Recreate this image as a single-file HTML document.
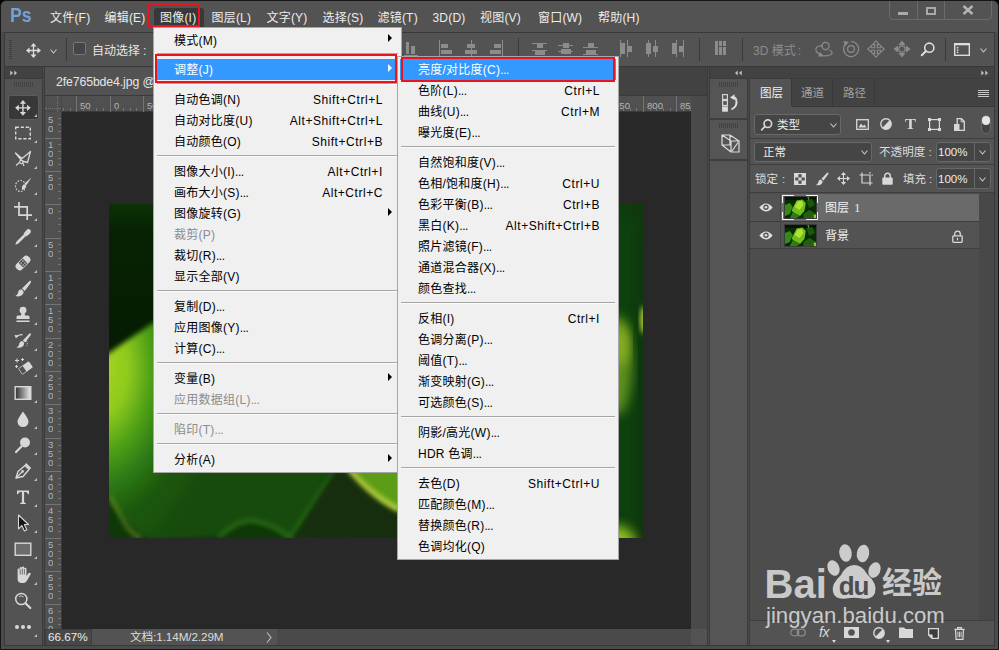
<!DOCTYPE html>
<html lang="zh-CN">
<head>
<meta charset="utf-8">
<title>Photoshop</title>
<style>
*{box-sizing:border-box;margin:0;padding:0}
html,body{width:999px;height:650px;overflow:hidden;background:#4d4d4d}
body{position:relative;font-family:"Liberation Sans","Noto Sans CJK SC",sans-serif;font-size:12px;color:#e6e6e6}
div,span,svg{position:absolute}
svg{overflow:visible}
.b{background:#535353}
.d{background:#424242}
.mi{top:10px;height:16px;line-height:16px;font-size:12px;color:#ececec;white-space:nowrap;letter-spacing:0.2px;margin-left:-1px}
.g{background:#8c8c8c}
.menu{background:#f0f0f0;border:1px solid #a6a6a6;color:#000;font-size:12px}
.row{left:2px;right:2px;height:21px;line-height:23px;white-space:nowrap;letter-spacing:0.25px}
.row .t{left:18px;top:0}
.row .k{top:0;right:16px;letter-spacing:0.55px}
.dis{color:#8c8c8c}
.row i{position:static;font-style:normal;letter-spacing:-0.45px}
.sep{height:2px;left:3px;right:3px;border-top:1px solid #a6a6a6;border-bottom:1px solid #fbfbfb}
.arr{width:0;height:0;right:7px;border-left:4px solid #000;border-top:4px solid transparent;border-bottom:4px solid transparent}
.hl{background:#3399ff;color:#fff}
.hl .arr{border-left-color:#fff}
.red{border:2px solid #e8151f}
.rl{font-size:9.6px;color:#b4b4b4;line-height:10px;white-space:nowrap}
.tk{background:#747474}
.vs{background:#3a3a3a;width:1px}
.lt{font-size:12px;color:#e2e2e2;white-space:nowrap;line-height:14px}
</style>
</head>
<body>
<div class="" style="left:0px;top:0px;width:999px;height:650px;background:#4b4b4b;border-radius:6px 6px 0 0;"></div>
<div class="b" style="left:1px;top:1px;width:997px;height:31px;border-radius:5px 5px 0 0;"></div>
<div style="left:10px;top:2.5px;font-size:21px;font-weight:bold;color:#73a2d6;line-height:24px;transform:scaleX(0.84);transform-origin:0 0">Ps</div>
<div class="" style="left:154px;top:8px;width:50px;height:19px;background:#383838;border-radius:3px 3px 0 0;"></div>
<div class="mi" style="left:51px">文件(F)</div>
<div class="mi" style="left:105.5px">编辑(E)</div>
<div class="mi" style="left:161px">图像(I)</div>
<div class="mi" style="left:212.5px">图层(L)</div>
<div class="mi" style="left:267.5px">文字(Y)</div>
<div class="mi" style="left:323.5px">选择(S)</div>
<div class="mi" style="left:378.5px">滤镜(T)</div>
<div class="mi" style="left:433.5px">3D(D)</div>
<div class="mi" style="left:481px">视图(V)</div>
<div class="mi" style="left:539px">窗口(W)</div>
<div class="mi" style="left:599px">帮助(H)</div>
<div style="left:889px;top:-4px;width:103px;height:24px;border:1px solid #6b6b6b;border-radius:4px"></div>
<div class="" style="left:917px;top:0px;width:1px;height:19px;background:#6b6b6b"></div>
<div class="" style="left:944px;top:0px;width:1px;height:19px;background:#6b6b6b"></div>
<div class="" style="left:898px;top:12px;width:10px;height:3px;background:#a9a9a9"></div>
<div class="" style="left:926px;top:7px;width:10px;height:8px;border:2px solid #a9a9a9"></div>
<svg style="left:962px;top:5px" width="12" height="10" viewBox="0 0 12 10"><path d="M1.5 1 L10.5 9 M10.5 1 L1.5 9" stroke="#b4b4b4" stroke-width="2.4" fill="none"/></svg>
<div class="b" style="left:4px;top:32px;width:991px;height:35px;border:1px solid #383838;"></div>
<div class="" style="left:9px;top:40px;width:3px;height:1px;background:#3e3e3e"></div>
<div class="" style="left:9px;top:42px;width:3px;height:1px;background:#3e3e3e"></div>
<div class="" style="left:9px;top:44px;width:3px;height:1px;background:#3e3e3e"></div>
<div class="" style="left:9px;top:46px;width:3px;height:1px;background:#3e3e3e"></div>
<div class="" style="left:9px;top:48px;width:3px;height:1px;background:#3e3e3e"></div>
<div class="" style="left:9px;top:50px;width:3px;height:1px;background:#3e3e3e"></div>
<div class="" style="left:9px;top:52px;width:3px;height:1px;background:#3e3e3e"></div>
<div class="" style="left:9px;top:54px;width:3px;height:1px;background:#3e3e3e"></div>
<div class="" style="left:9px;top:56px;width:3px;height:1px;background:#3e3e3e"></div>
<div class="" style="left:9px;top:58px;width:3px;height:1px;background:#3e3e3e"></div>
<svg style="left:26px;top:43px" width="15" height="15" viewBox="0 0 16 16"><path d="M8 0 L11.2 3.8 H8.7 V7.3 H12.2 V4.8 L16 8 L12.2 11.2 V8.7 H8.7 V12.2 H11.2 L8 16 L4.8 12.2 H7.3 V8.7 H3.8 V11.2 L0 8 L3.8 4.8 V7.3 H7.3 V3.8 H4.8 Z" fill="#dcdcdc"/></svg>
<svg style="left:50px;top:49px" width="7" height="5" viewBox="0 0 7 5"><path d="M0.5 0.5 L3.5 4 L6.5 0.5" stroke="#c8c8c8" stroke-width="1.1" fill="none"/></svg>
<div class="vs" style="left:66px;top:38px;width:1px;height:23px;"></div>
<div class="" style="left:73px;top:42px;width:13px;height:13px;background:#454545;border:1px solid #777;border-radius:2px"></div>
<div class="lt" style="left:92px;top:44px;color:#e6e6e6">自动选择<span style="position:static;margin-left:3px">:</span></div>
<div class="g" style="left:404px;top:55px;width:14px;height:1px;"></div>
<div class="g" style="left:406px;top:42px;width:3px;height:12px;"></div>
<div class="g" style="left:411px;top:46px;width:4px;height:8px;"></div>
<div class="g" style="left:439px;top:40px;width:1px;height:17px;"></div>
<div class="g" style="left:441px;top:44px;width:7px;height:4px;"></div>
<div class="g" style="left:441px;top:50px;width:11px;height:4px;"></div>
<div class="g" style="left:471px;top:40px;width:1px;height:17px;"></div>
<div class="g" style="left:467px;top:44px;width:8px;height:4px;"></div>
<div class="g" style="left:465px;top:50px;width:12px;height:4px;"></div>
<div class="g" style="left:502px;top:40px;width:1px;height:17px;"></div>
<div class="g" style="left:494px;top:44px;width:7px;height:4px;"></div>
<div class="g" style="left:490px;top:50px;width:11px;height:4px;"></div>
<div class="vs" style="left:518px;top:38px;width:1px;height:23px;"></div>
<div class="g" style="left:532px;top:43px;width:15px;height:1px;"></div>
<div class="g" style="left:537px;top:44px;width:6px;height:4px;"></div>
<div class="g" style="left:532px;top:50px;width:15px;height:1px;"></div>
<div class="g" style="left:535px;top:51px;width:10px;height:4px;"></div>
<div class="g" style="left:558px;top:45px;width:15px;height:1px;"></div>
<div class="g" style="left:563px;top:43px;width:6px;height:5px;"></div>
<div class="g" style="left:558px;top:51px;width:15px;height:1px;"></div>
<div class="g" style="left:561px;top:49px;width:10px;height:5px;"></div>
<div class="g" style="left:583px;top:47px;width:15px;height:1px;"></div>
<div class="g" style="left:588px;top:43px;width:6px;height:4px;"></div>
<div class="g" style="left:583px;top:54px;width:15px;height:1px;"></div>
<div class="g" style="left:586px;top:50px;width:10px;height:4px;"></div>
<div class="g" style="left:620px;top:40px;width:1px;height:17px;"></div>
<div class="g" style="left:621px;top:43px;width:4px;height:11px;"></div>
<div class="g" style="left:627px;top:40px;width:1px;height:17px;"></div>
<div class="g" style="left:628px;top:46px;width:4px;height:6px;"></div>
<div class="g" style="left:648px;top:40px;width:1px;height:17px;"></div>
<div class="g" style="left:646px;top:43px;width:5px;height:11px;"></div>
<div class="g" style="left:655px;top:40px;width:1px;height:17px;"></div>
<div class="g" style="left:653px;top:46px;width:5px;height:6px;"></div>
<div class="g" style="left:676px;top:40px;width:1px;height:17px;"></div>
<div class="g" style="left:672px;top:43px;width:4px;height:11px;"></div>
<div class="g" style="left:683px;top:40px;width:1px;height:17px;"></div>
<div class="g" style="left:679px;top:46px;width:4px;height:6px;"></div>
<div class="vs" style="left:699px;top:38px;width:1px;height:23px;"></div>
<div class="g" style="left:715px;top:41px;width:3px;height:14px;"></div>
<div class="g" style="left:719px;top:41px;width:3px;height:5px;"></div>
<div class="g" style="left:719px;top:47px;width:3px;height:8px;"></div>
<div class="g" style="left:723px;top:41px;width:3px;height:5px;"></div>
<div class="g" style="left:723px;top:47px;width:3px;height:8px;"></div>
<div class="vs" style="left:742px;top:38px;width:1px;height:23px;"></div>
<div class="lt" style="left:753px;top:44px;color:#8c8c8c;font-size:12px">3D 模式<span style="position:static;margin-left:2px">:</span></div>
<svg style="left:814px;top:40px" width="100" height="18" viewBox="0 0 100 18"><g fill="none" stroke="#8c8c8c" stroke-width="1.2"><path d="M6 14.5 Q0 11 2.5 7.5 Q5 5 9 6.5 M15.5 10 Q20 12 17 14.5 Q13 16.5 8.5 15.5"/><circle cx="11.5" cy="6" r="3.6"/><path d="M32 3.5 A7.5 7.5 0 1 0 37 1.5"/><circle cx="37" cy="9" r="3.4"/><path d="M62 0.8 L65.4 4.6 H63.3 V7.7 H66.4 V5.6 L70.2 9 L66.4 12.4 V10.3 H63.3 V13.4 H65.4 L62 17.2 L58.6 13.4 H60.7 V10.3 H57.6 V12.4 L53.8 9 L57.6 5.6 V7.7 H60.7 V4.6 H58.6 Z" stroke-width="1.1"/><circle cx="88" cy="9" r="3.2"/></g><g fill="#8c8c8c"><path d="M6.5 12 L9.5 16.5 L4 16.5 Z M29.5 1 L35 2 L31 6 Z M88 0.5 L91.5 5 H84.5 Z M88 17.5 L91.5 13 H84.5 Z M79.5 9 L84 5.5 V12.5 Z M96.5 9 L92 5.5 V12.5 Z"/></g></svg>
<svg style="left:921px;top:42px" width="14" height="14" viewBox="0 0 14 14"><g><circle cx="8.3" cy="5.7" r="4.6" fill="none" stroke="#dcdcdc" stroke-width="1.6"/><path d="M5 9 L0.8 13.2" stroke="#dcdcdc" stroke-width="2" stroke-linecap="round"/></g></svg>
<div class="vs" style="left:945px;top:38px;width:1px;height:23px;"></div>
<svg style="left:954px;top:43px" width="16" height="13" viewBox="0 0 16 13"><rect x="0.7" y="0.7" width="14.6" height="11.6" fill="none" stroke="#dcdcdc" stroke-width="1.4"/><rect x="0.7" y="0.7" width="14.6" height="1.6" fill="#dcdcdc"/><rect x="2.8" y="4" width="1.6" height="1.4" fill="#dcdcdc"/><rect x="2.8" y="6.3" width="1.6" height="1.4" fill="#dcdcdc"/><rect x="2.8" y="8.6" width="1.6" height="1.4" fill="#dcdcdc"/></svg>
<svg style="left:980px;top:48px" width="7" height="5" viewBox="0 0 7 5"><path d="M0.5 0.5 L3.5 4 L6.5 0.5" stroke="#c8c8c8" stroke-width="1.1" fill="none"/></svg>
<div class="d" style="left:5px;top:67px;width:38px;height:11px;"></div>
<svg style="left:10px;top:70px" width="8" height="6" viewBox="0 0 8 6"><path d="M0.3 0.5 L3 3 L0.3 5.5 Z M4.3 0.5 L7 3 L4.3 5.5 Z" fill="#c4c4c4"/></svg>
<div class="b" style="left:5px;top:78px;width:38px;height:568px;border-top:1px solid #3c3c3c"></div>
<div class="" style="left:14px;top:82px;width:1px;height:5px;background:#424242"></div>
<div class="" style="left:16px;top:82px;width:1px;height:5px;background:#424242"></div>
<div class="" style="left:18px;top:82px;width:1px;height:5px;background:#424242"></div>
<div class="" style="left:20px;top:82px;width:1px;height:5px;background:#424242"></div>
<div class="" style="left:22px;top:82px;width:1px;height:5px;background:#424242"></div>
<div class="" style="left:24px;top:82px;width:1px;height:5px;background:#424242"></div>
<div class="" style="left:26px;top:82px;width:1px;height:5px;background:#424242"></div>
<div class="" style="left:28px;top:82px;width:1px;height:5px;background:#424242"></div>
<div class="" style="left:30px;top:82px;width:1px;height:5px;background:#424242"></div>
<div class="" style="left:32px;top:82px;width:1px;height:5px;background:#424242"></div>
<div class="" style="left:8px;top:95px;width:31px;height:25px;background:#383838;border:1px solid #5c5c5c;border-radius:3px"></div>
<svg style="left:14px;top:98px" width="18" height="18" viewBox="0 0 18 18"><path transform="translate(1.1,2) scale(0.98)" d="M8 0 L11.2 3.8 H8.7 V7.3 H12.2 V4.8 L16 8 L12.2 11.2 V8.7 H8.7 V12.2 H11.2 L8 16 L4.8 12.2 H7.3 V8.7 H3.8 V11.2 L0 8 L3.8 4.8 V7.3 H7.3 V3.8 H4.8 Z" fill="#d8d8d8"/></svg>
<svg style="left:34px;top:114px" width="3" height="3" viewBox="0 0 3 3"><path d="M3 0 V3 H0 Z" fill="#bdbdbd"/></svg>
<svg style="left:14px;top:124px" width="18" height="18" viewBox="0 0 18 18"><rect x="1.7" y="3.2" width="14.6" height="11.6" fill="none" stroke="#d8d8d8" stroke-width="1.4" stroke-dasharray="3.2 1.8"/></svg>
<svg style="left:34px;top:140px" width="3" height="3" viewBox="0 0 3 3"><path d="M3 0 V3 H0 Z" fill="#bdbdbd"/></svg>
<svg style="left:14px;top:150px" width="18" height="18" viewBox="0 0 18 18"><path d="M1.5 3 L8 8.5 L16.5 1.5 L13.5 12.5 L8 11 Z" fill="none" stroke="#d8d8d8" stroke-width="1.3" stroke-linejoin="round"/><path d="M6.5 11.5 L2 15.5 M8.5 12 L10 16" stroke="#d8d8d8" stroke-width="1.2"/><circle cx="7.3" cy="12" r="1.6" fill="#535353" stroke="#d8d8d8" stroke-width="1.1"/></svg>
<svg style="left:34px;top:166px" width="3" height="3" viewBox="0 0 3 3"><path d="M3 0 V3 H0 Z" fill="#bdbdbd"/></svg>
<svg style="left:14px;top:176px" width="18" height="18" viewBox="0 0 18 18"><ellipse cx="6.5" cy="10" rx="5" ry="5.5" fill="none" stroke="#d8d8d8" stroke-width="1.1" stroke-dasharray="1.6 1.4"/><path d="M17.5 1.5 L12.5 9 L10.5 7.5 Z M10 8.2 Q7.3 9.8 8 14 Q11.8 13 12.3 9.8 Z" fill="#d8d8d8"/></svg>
<svg style="left:34px;top:192px" width="3" height="3" viewBox="0 0 3 3"><path d="M3 0 V3 H0 Z" fill="#bdbdbd"/></svg>
<svg style="left:14px;top:202px" width="18" height="18" viewBox="0 0 18 18"><path d="M5 0 V13.2 H18 M0 4.8 H13.2 V18" fill="none" stroke="#d8d8d8" stroke-width="1.7"/></svg>
<svg style="left:34px;top:218px" width="3" height="3" viewBox="0 0 3 3"><path d="M3 0 V3 H0 Z" fill="#bdbdbd"/></svg>
<svg style="left:14px;top:228px" width="18" height="18" viewBox="0 0 18 18"><path d="M15.8 2.2 Q17 3.8 15.3 5.2 L13.2 7 L11 4.8 L12.8 2.7 Q14.3 1 15.8 2.2 Z M10 5 L13 8 M10.8 6.3 L3 14 L2 16 L4 15 L11.8 7.3" fill="#d8d8d8" stroke="#d8d8d8" stroke-width="1.2" stroke-linejoin="round"/></svg>
<svg style="left:34px;top:244px" width="3" height="3" viewBox="0 0 3 3"><path d="M3 0 V3 H0 Z" fill="#bdbdbd"/></svg>
<svg style="left:14px;top:254px" width="18" height="18" viewBox="0 0 18 18"><g transform="rotate(-45 9 9)"><rect x="0.5" y="5" width="17" height="8" rx="3.5" fill="#d8d8d8"/><rect x="6" y="5.8" width="6" height="6.4" fill="#535353"/><circle cx="7.7" cy="7.6" r="0.7" fill="#d8d8d8"/><circle cx="10.3" cy="7.6" r="0.7" fill="#d8d8d8"/><circle cx="7.7" cy="10.4" r="0.7" fill="#d8d8d8"/><circle cx="10.3" cy="10.4" r="0.7" fill="#d8d8d8"/></g><path d="M1 2 h4 M3 0 v4" stroke="#d8d8d8" stroke-width="0" /></svg>
<svg style="left:34px;top:270px" width="3" height="3" viewBox="0 0 3 3"><path d="M3 0 V3 H0 Z" fill="#bdbdbd"/></svg>
<svg style="left:14px;top:280px" width="18" height="18" viewBox="0 0 18 18"><path d="M16.8 1 Q17.5 1.7 16.6 3 L10.8 11 L8 8.6 L15 1.4 Q16 0.4 16.8 1 Z M7.2 9.3 Q4.2 9.8 4 13 Q3.4 15.2 1.3 16 Q6.8 17.5 9 14 Q10 12.3 9.4 11 Z" fill="#d8d8d8"/></svg>
<svg style="left:34px;top:296px" width="3" height="3" viewBox="0 0 3 3"><path d="M3 0 V3 H0 Z" fill="#bdbdbd"/></svg>
<svg style="left:14px;top:306px" width="18" height="18" viewBox="0 0 18 18"><circle cx="9" cy="4.2" r="3.4" fill="#d8d8d8"/><path d="M7.6 6 h2.8 l0.6 3.5 h3 q1.5 0 1.5 1.5 v2 h-13 v-2 q0 -1.5 1.5 -1.5 h3 Z M2.5 14.5 h13 v1.5 h-13 Z" fill="#d8d8d8"/></svg>
<svg style="left:34px;top:322px" width="3" height="3" viewBox="0 0 3 3"><path d="M3 0 V3 H0 Z" fill="#bdbdbd"/></svg>
<svg style="left:14px;top:332px" width="18" height="18" viewBox="0 0 18 18"><path d="M16.8 1.5 Q17.4 2.2 16.6 3.3 L11.2 10.5 L8.8 8.4 L15.2 1.8 Q16.1 0.9 16.8 1.5 Z M8 9 Q5.3 9.5 5.1 12.5 Q4.5 14.6 2.5 15.5 Q7.5 16.8 9.6 13.5 Q10.5 11.8 10 10.6 Z" fill="#d8d8d8"/><path d="M2.5 5 Q5 2 8.5 2.8" fill="none" stroke="#d8d8d8" stroke-width="1.2"/><path d="M0.5 3 L4.2 3.2 L2 6.5 Z" fill="#d8d8d8"/><path d="M12.5 9 Q14.5 12 12 15" fill="none" stroke="#d8d8d8" stroke-width="1" stroke-dasharray="1 1.2"/></svg>
<svg style="left:34px;top:348px" width="3" height="3" viewBox="0 0 3 3"><path d="M3 0 V3 H0 Z" fill="#bdbdbd"/></svg>
<svg style="left:14px;top:358px" width="18" height="18" viewBox="0 0 18 18"><g transform="rotate(-35 11 10)"><rect x="5" y="6.5" width="13" height="7.5" rx="1" fill="#d8d8d8"/><rect x="5.6" y="7.1" width="4.6" height="6.3" fill="#535353"/></g><path d="M3 0.5 v4 M1 2.5 h4 M8.5 0 v3 M7 1.5 h3 M2.5 7 v3 M1 8.5 h3" stroke="#d8d8d8" stroke-width="1"/></svg>
<svg style="left:34px;top:374px" width="3" height="3" viewBox="0 0 3 3"><path d="M3 0 V3 H0 Z" fill="#bdbdbd"/></svg>
<svg style="left:14px;top:384px" width="18" height="18" viewBox="0 0 18 18"><defs><linearGradient id="gg" x1="0" x2="1"><stop offset="0" stop-color="#2e2e2e"/><stop offset="1" stop-color="#ededed"/></linearGradient></defs><rect x="1.2" y="2.7" width="15.6" height="12.6" fill="url(#gg)" stroke="#d8d8d8" stroke-width="1.4"/></svg>
<svg style="left:34px;top:400px" width="3" height="3" viewBox="0 0 3 3"><path d="M3 0 V3 H0 Z" fill="#bdbdbd"/></svg>
<svg style="left:14px;top:410px" width="18" height="18" viewBox="0 0 18 18"><path d="M9 1.5 Q14.5 9 14.5 11.5 A5.5 5.5 0 0 1 3.5 11.5 Q3.5 9 9 1.5 Z" fill="#d8d8d8"/></svg>
<svg style="left:34px;top:426px" width="3" height="3" viewBox="0 0 3 3"><path d="M3 0 V3 H0 Z" fill="#bdbdbd"/></svg>
<svg style="left:14px;top:436px" width="18" height="18" viewBox="0 0 18 18"><circle cx="11" cy="6.5" r="5" fill="#d8d8d8"/><path d="M7.5 10.5 L2 16" stroke="#d8d8d8" stroke-width="2.2" stroke-linecap="round"/></svg>
<svg style="left:34px;top:452px" width="3" height="3" viewBox="0 0 3 3"><path d="M3 0 V3 H0 Z" fill="#bdbdbd"/></svg>
<svg style="left:14px;top:462px" width="18" height="18" viewBox="0 0 18 18"><path d="M2 16 L4 9.5 L11 3.5 L15 7.5 L9 14.5 Z" fill="none" stroke="#d8d8d8" stroke-width="1.4" stroke-linejoin="round"/><path d="M2.5 15.5 L8 10" stroke="#d8d8d8" stroke-width="1.1"/><circle cx="8.6" cy="9.4" r="1.3" fill="#d8d8d8"/><path d="M11.5 1.8 L16.5 6.8" stroke="#d8d8d8" stroke-width="2"/></svg>
<svg style="left:34px;top:478px" width="3" height="3" viewBox="0 0 3 3"><path d="M3 0 V3 H0 Z" fill="#bdbdbd"/></svg>
<svg style="left:14px;top:488px" width="18" height="18" viewBox="0 0 18 18"><path d="M3 2.5 H15 V6.2 H14 Q13.8 4 11.5 3.9 H10.1 V14 Q10.1 15 11.8 15.1 V16 H6.2 V15.1 Q7.9 15 7.9 14 V3.9 H6.5 Q4.2 4 4 6.2 H3 Z" fill="#d8d8d8"/></svg>
<svg style="left:34px;top:504px" width="3" height="3" viewBox="0 0 3 3"><path d="M3 0 V3 H0 Z" fill="#bdbdbd"/></svg>
<svg style="left:14px;top:514px" width="18" height="18" viewBox="0 0 18 18"><path d="M4.5 1 L14.5 10.5 H10.3 L12.8 15.8 L10.4 17 L7.8 11.6 L4.5 14.8 Z" fill="#161616" stroke="#d8d8d8" stroke-width="1.1" stroke-linejoin="round"/></svg>
<svg style="left:34px;top:530px" width="3" height="3" viewBox="0 0 3 3"><path d="M3 0 V3 H0 Z" fill="#bdbdbd"/></svg>
<svg style="left:14px;top:540px" width="18" height="18" viewBox="0 0 18 18"><rect x="1.2" y="3.2" width="15.6" height="12.1" fill="#6c6c6c" stroke="#d8d8d8" stroke-width="1.4"/></svg>
<svg style="left:34px;top:556px" width="3" height="3" viewBox="0 0 3 3"><path d="M3 0 V3 H0 Z" fill="#bdbdbd"/></svg>
<svg style="left:14px;top:566px" width="18" height="18" viewBox="0 0 18 18"><path transform="translate(-0.8,0) scale(1.06,1)" d="M4.2 9.5 V3.6 Q4.2 2.6 5.2 2.6 Q6.2 2.6 6.2 3.6 V2 Q6.2 1 7.2 1 Q8.3 1 8.3 2 V1.6 Q8.3 0.6 9.4 0.6 Q10.4 0.6 10.4 1.6 V2.6 Q10.4 1.7 11.4 1.7 Q12.5 1.7 12.5 2.7 V10 L14.5 7.3 Q15.4 6.3 16.3 7 Q16.9 7.6 16.3 8.6 L12.8 15 Q11.8 17 9.6 17 H8 Q4.2 17 4.2 13 Z" fill="#d8d8d8"/><path d="M6.2 3.5 V8.5 M8.3 2.5 V8.5 M10.4 3 V8.5" stroke="#535353" stroke-width="0.8"/></svg>
<svg style="left:34px;top:582px" width="3" height="3" viewBox="0 0 3 3"><path d="M3 0 V3 H0 Z" fill="#bdbdbd"/></svg>
<svg style="left:14px;top:592px" width="18" height="18" viewBox="0 0 18 18"><circle cx="7.3" cy="7" r="5.6" fill="none" stroke="#d8d8d8" stroke-width="1.5"/><path d="M5 4.5 Q7.5 3 9.5 5" fill="none" stroke="#d8d8d8" stroke-width="0.9"/><path d="M11.5 11.2 L16.3 16" stroke="#d8d8d8" stroke-width="2.2" stroke-linecap="round"/></svg>
<svg style="left:14px;top:618px" width="18" height="18" viewBox="0 0 18 18"><circle cx="3" cy="9" r="2" fill="#d8d8d8"/><circle cx="9" cy="9" r="2" fill="#d8d8d8"/><circle cx="15" cy="9" r="2" fill="#d8d8d8"/></svg>
<svg style="left:34px;top:634px" width="3" height="3" viewBox="0 0 3 3"><path d="M3 0 V3 H0 Z" fill="#bdbdbd"/></svg>
<div class="" style="left:42px;top:67px;width:1px;height:579px;background:#3a3a3a"></div>
<div class="" style="left:43px;top:67px;width:1px;height:579px;background:#4b4b4b"></div>
<div class="" style="left:44px;top:67px;width:1px;height:579px;background:#3a3a3a"></div>
<div class="d" style="left:45px;top:67px;width:663px;height:29px;"></div>
<div class="b" style="left:45px;top:67px;width:262px;height:29px;"></div>
<div class="lt" style="left:56px;top:75px;font-size:12.3px;letter-spacing:-0.12px;color:#e4e4e4">2fe765bde4.jpg @ 66.7% (图层 1, RGB/8#) *</div>
<div class="" style="left:45px;top:95px;width:663px;height:1px;background:#3a3a3a"></div>
<div class="" style="left:45px;top:96px;width:646px;height:16px;background:#505050;border-bottom:1px solid #3a3a3a"></div>
<div class="" style="left:45px;top:112px;width:17px;height:517px;background:#505050;border-right:1px solid #3a3a3a"></div>
<div class="" style="left:45px;top:96px;width:17px;height:16px;background:#505050;border-right:1px solid #484848;border-bottom:1px solid #484848"></div>
<div style="left:45px;top:108px;width:16px;height:0;border-top:1px dotted #727272"></div><div style="left:57px;top:96px;width:0;height:16px;border-left:1px dotted #727272"></div>
<div class="" style="left:62px;top:112px;width:629px;height:517px;background:#282828"></div>
<div class="" style="left:691px;top:96px;width:16px;height:533px;background:#4a4a4a"></div>
<div class="tk" style="left:63px;top:108px;width:1px;height:3px;"></div>
<div class="tk" style="left:70px;top:108px;width:1px;height:3px;"></div>
<div class="tk" style="left:76px;top:96px;width:1px;height:16px;"></div>
<div class="rl" style="left:80px;top:101px;max-width:611px;overflow:hidden">50</div>
<div class="tk" style="left:83px;top:108px;width:1px;height:3px;"></div>
<div class="tk" style="left:89px;top:108px;width:1px;height:3px;"></div>
<div class="tk" style="left:96px;top:108px;width:1px;height:3px;"></div>
<div class="tk" style="left:103px;top:108px;width:1px;height:3px;"></div>
<div class="tk" style="left:110px;top:96px;width:1px;height:16px;"></div>
<div class="rl" style="left:114px;top:101px;max-width:577px;overflow:hidden">0</div>
<div class="tk" style="left:116px;top:108px;width:1px;height:3px;"></div>
<div class="tk" style="left:123px;top:108px;width:1px;height:3px;"></div>
<div class="tk" style="left:130px;top:108px;width:1px;height:3px;"></div>
<div class="tk" style="left:136px;top:108px;width:1px;height:3px;"></div>
<div class="tk" style="left:143px;top:96px;width:1px;height:16px;"></div>
<div class="rl" style="left:147px;top:101px;max-width:544px;overflow:hidden">50</div>
<div class="tk" style="left:150px;top:108px;width:1px;height:3px;"></div>
<div class="tk" style="left:156px;top:108px;width:1px;height:3px;"></div>
<div class="tk" style="left:163px;top:108px;width:1px;height:3px;"></div>
<div class="tk" style="left:170px;top:108px;width:1px;height:3px;"></div>
<div class="tk" style="left:176px;top:96px;width:1px;height:16px;"></div>
<div class="rl" style="left:180px;top:101px;max-width:511px;overflow:hidden">100</div>
<div class="tk" style="left:183px;top:108px;width:1px;height:3px;"></div>
<div class="tk" style="left:190px;top:108px;width:1px;height:3px;"></div>
<div class="tk" style="left:196px;top:108px;width:1px;height:3px;"></div>
<div class="tk" style="left:203px;top:108px;width:1px;height:3px;"></div>
<div class="tk" style="left:210px;top:96px;width:1px;height:16px;"></div>
<div class="rl" style="left:214px;top:101px;max-width:477px;overflow:hidden">150</div>
<div class="tk" style="left:216px;top:108px;width:1px;height:3px;"></div>
<div class="tk" style="left:223px;top:108px;width:1px;height:3px;"></div>
<div class="tk" style="left:230px;top:108px;width:1px;height:3px;"></div>
<div class="tk" style="left:236px;top:108px;width:1px;height:3px;"></div>
<div class="tk" style="left:243px;top:96px;width:1px;height:16px;"></div>
<div class="rl" style="left:247px;top:101px;max-width:444px;overflow:hidden">200</div>
<div class="tk" style="left:250px;top:108px;width:1px;height:3px;"></div>
<div class="tk" style="left:256px;top:108px;width:1px;height:3px;"></div>
<div class="tk" style="left:263px;top:108px;width:1px;height:3px;"></div>
<div class="tk" style="left:270px;top:108px;width:1px;height:3px;"></div>
<div class="tk" style="left:276px;top:96px;width:1px;height:16px;"></div>
<div class="rl" style="left:280px;top:101px;max-width:411px;overflow:hidden">250</div>
<div class="tk" style="left:283px;top:108px;width:1px;height:3px;"></div>
<div class="tk" style="left:290px;top:108px;width:1px;height:3px;"></div>
<div class="tk" style="left:296px;top:108px;width:1px;height:3px;"></div>
<div class="tk" style="left:303px;top:108px;width:1px;height:3px;"></div>
<div class="tk" style="left:310px;top:96px;width:1px;height:16px;"></div>
<div class="rl" style="left:314px;top:101px;max-width:377px;overflow:hidden">300</div>
<div class="tk" style="left:316px;top:108px;width:1px;height:3px;"></div>
<div class="tk" style="left:323px;top:108px;width:1px;height:3px;"></div>
<div class="tk" style="left:330px;top:108px;width:1px;height:3px;"></div>
<div class="tk" style="left:336px;top:108px;width:1px;height:3px;"></div>
<div class="tk" style="left:343px;top:96px;width:1px;height:16px;"></div>
<div class="rl" style="left:347px;top:101px;max-width:344px;overflow:hidden">350</div>
<div class="tk" style="left:350px;top:108px;width:1px;height:3px;"></div>
<div class="tk" style="left:356px;top:108px;width:1px;height:3px;"></div>
<div class="tk" style="left:363px;top:108px;width:1px;height:3px;"></div>
<div class="tk" style="left:370px;top:108px;width:1px;height:3px;"></div>
<div class="tk" style="left:376px;top:96px;width:1px;height:16px;"></div>
<div class="rl" style="left:380px;top:101px;max-width:311px;overflow:hidden">400</div>
<div class="tk" style="left:383px;top:108px;width:1px;height:3px;"></div>
<div class="tk" style="left:390px;top:108px;width:1px;height:3px;"></div>
<div class="tk" style="left:396px;top:108px;width:1px;height:3px;"></div>
<div class="tk" style="left:403px;top:108px;width:1px;height:3px;"></div>
<div class="tk" style="left:410px;top:96px;width:1px;height:16px;"></div>
<div class="rl" style="left:414px;top:101px;max-width:277px;overflow:hidden">450</div>
<div class="tk" style="left:416px;top:108px;width:1px;height:3px;"></div>
<div class="tk" style="left:423px;top:108px;width:1px;height:3px;"></div>
<div class="tk" style="left:430px;top:108px;width:1px;height:3px;"></div>
<div class="tk" style="left:436px;top:108px;width:1px;height:3px;"></div>
<div class="tk" style="left:443px;top:96px;width:1px;height:16px;"></div>
<div class="rl" style="left:447px;top:101px;max-width:244px;overflow:hidden">500</div>
<div class="tk" style="left:450px;top:108px;width:1px;height:3px;"></div>
<div class="tk" style="left:456px;top:108px;width:1px;height:3px;"></div>
<div class="tk" style="left:463px;top:108px;width:1px;height:3px;"></div>
<div class="tk" style="left:470px;top:108px;width:1px;height:3px;"></div>
<div class="tk" style="left:476px;top:96px;width:1px;height:16px;"></div>
<div class="rl" style="left:480px;top:101px;max-width:211px;overflow:hidden">550</div>
<div class="tk" style="left:483px;top:108px;width:1px;height:3px;"></div>
<div class="tk" style="left:490px;top:108px;width:1px;height:3px;"></div>
<div class="tk" style="left:496px;top:108px;width:1px;height:3px;"></div>
<div class="tk" style="left:503px;top:108px;width:1px;height:3px;"></div>
<div class="tk" style="left:510px;top:96px;width:1px;height:16px;"></div>
<div class="rl" style="left:514px;top:101px;max-width:177px;overflow:hidden">600</div>
<div class="tk" style="left:516px;top:108px;width:1px;height:3px;"></div>
<div class="tk" style="left:523px;top:108px;width:1px;height:3px;"></div>
<div class="tk" style="left:530px;top:108px;width:1px;height:3px;"></div>
<div class="tk" style="left:536px;top:108px;width:1px;height:3px;"></div>
<div class="tk" style="left:543px;top:96px;width:1px;height:16px;"></div>
<div class="rl" style="left:547px;top:101px;max-width:144px;overflow:hidden">650</div>
<div class="tk" style="left:550px;top:108px;width:1px;height:3px;"></div>
<div class="tk" style="left:556px;top:108px;width:1px;height:3px;"></div>
<div class="tk" style="left:563px;top:108px;width:1px;height:3px;"></div>
<div class="tk" style="left:570px;top:108px;width:1px;height:3px;"></div>
<div class="tk" style="left:576px;top:96px;width:1px;height:16px;"></div>
<div class="rl" style="left:580px;top:101px;max-width:111px;overflow:hidden">700</div>
<div class="tk" style="left:583px;top:108px;width:1px;height:3px;"></div>
<div class="tk" style="left:590px;top:108px;width:1px;height:3px;"></div>
<div class="tk" style="left:596px;top:108px;width:1px;height:3px;"></div>
<div class="tk" style="left:603px;top:108px;width:1px;height:3px;"></div>
<div class="tk" style="left:610px;top:96px;width:1px;height:16px;"></div>
<div class="rl" style="left:614px;top:101px;max-width:77px;overflow:hidden">750</div>
<div class="tk" style="left:616px;top:108px;width:1px;height:3px;"></div>
<div class="tk" style="left:623px;top:108px;width:1px;height:3px;"></div>
<div class="tk" style="left:630px;top:108px;width:1px;height:3px;"></div>
<div class="tk" style="left:636px;top:108px;width:1px;height:3px;"></div>
<div class="tk" style="left:643px;top:96px;width:1px;height:16px;"></div>
<div class="rl" style="left:647px;top:101px;max-width:44px;overflow:hidden">800</div>
<div class="tk" style="left:650px;top:108px;width:1px;height:3px;"></div>
<div class="tk" style="left:656px;top:108px;width:1px;height:3px;"></div>
<div class="tk" style="left:663px;top:108px;width:1px;height:3px;"></div>
<div class="tk" style="left:670px;top:108px;width:1px;height:3px;"></div>
<div class="tk" style="left:676px;top:96px;width:1px;height:16px;"></div>
<div class="rl" style="left:680px;top:101px;max-width:11px;overflow:hidden">850</div>
<div class="tk" style="left:683px;top:108px;width:1px;height:3px;"></div>
<div class="tk" style="left:690px;top:108px;width:1px;height:3px;"></div>
<div class="rl" style="left:48px;top:115.1px;height:10.0px;overflow:hidden">5</div>
<div class="rl" style="left:48px;top:124.4px;height:10.0px;overflow:hidden">0</div>
<div class="tk" style="left:58px;top:118px;width:3px;height:1px;"></div>
<div class="tk" style="left:58px;top:124px;width:3px;height:1px;"></div>
<div class="tk" style="left:58px;top:131px;width:3px;height:1px;"></div>
<div class="tk" style="left:45px;top:138px;width:16px;height:1px;"></div>
<div class="rl" style="left:48px;top:139.8px;height:10.0px;overflow:hidden">1</div>
<div class="rl" style="left:48px;top:149.1px;height:10.0px;overflow:hidden">0</div>
<div class="rl" style="left:48px;top:158.4px;height:10.0px;overflow:hidden">0</div>
<div class="tk" style="left:58px;top:144px;width:3px;height:1px;"></div>
<div class="tk" style="left:58px;top:151px;width:3px;height:1px;"></div>
<div class="tk" style="left:58px;top:158px;width:3px;height:1px;"></div>
<div class="tk" style="left:58px;top:164px;width:3px;height:1px;"></div>
<div class="tk" style="left:45px;top:171px;width:16px;height:1px;"></div>
<div class="rl" style="left:48px;top:172.8px;height:10.0px;overflow:hidden">5</div>
<div class="rl" style="left:48px;top:182.1px;height:10.0px;overflow:hidden">0</div>
<div class="tk" style="left:58px;top:178px;width:3px;height:1px;"></div>
<div class="tk" style="left:58px;top:184px;width:3px;height:1px;"></div>
<div class="tk" style="left:58px;top:191px;width:3px;height:1px;"></div>
<div class="tk" style="left:58px;top:198px;width:3px;height:1px;"></div>
<div class="tk" style="left:45px;top:204px;width:16px;height:1px;"></div>
<div class="rl" style="left:48px;top:205.8px;height:10.0px;overflow:hidden">0</div>
<div class="tk" style="left:58px;top:211px;width:3px;height:1px;"></div>
<div class="tk" style="left:58px;top:218px;width:3px;height:1px;"></div>
<div class="tk" style="left:58px;top:224px;width:3px;height:1px;"></div>
<div class="tk" style="left:58px;top:231px;width:3px;height:1px;"></div>
<div class="tk" style="left:45px;top:238px;width:16px;height:1px;"></div>
<div class="rl" style="left:48px;top:239.8px;height:10.0px;overflow:hidden">5</div>
<div class="rl" style="left:48px;top:249.1px;height:10.0px;overflow:hidden">0</div>
<div class="tk" style="left:58px;top:244px;width:3px;height:1px;"></div>
<div class="tk" style="left:58px;top:251px;width:3px;height:1px;"></div>
<div class="tk" style="left:58px;top:258px;width:3px;height:1px;"></div>
<div class="tk" style="left:58px;top:264px;width:3px;height:1px;"></div>
<div class="tk" style="left:45px;top:271px;width:16px;height:1px;"></div>
<div class="rl" style="left:48px;top:272.8px;height:10.0px;overflow:hidden">1</div>
<div class="rl" style="left:48px;top:282.1px;height:10.0px;overflow:hidden">0</div>
<div class="rl" style="left:48px;top:291.4px;height:10.0px;overflow:hidden">0</div>
<div class="tk" style="left:58px;top:278px;width:3px;height:1px;"></div>
<div class="tk" style="left:58px;top:284px;width:3px;height:1px;"></div>
<div class="tk" style="left:58px;top:291px;width:3px;height:1px;"></div>
<div class="tk" style="left:58px;top:298px;width:3px;height:1px;"></div>
<div class="tk" style="left:45px;top:304px;width:16px;height:1px;"></div>
<div class="rl" style="left:48px;top:305.8px;height:10.0px;overflow:hidden">1</div>
<div class="rl" style="left:48px;top:315.1px;height:10.0px;overflow:hidden">5</div>
<div class="rl" style="left:48px;top:324.4px;height:10.0px;overflow:hidden">0</div>
<div class="tk" style="left:58px;top:311px;width:3px;height:1px;"></div>
<div class="tk" style="left:58px;top:318px;width:3px;height:1px;"></div>
<div class="tk" style="left:58px;top:324px;width:3px;height:1px;"></div>
<div class="tk" style="left:58px;top:331px;width:3px;height:1px;"></div>
<div class="tk" style="left:45px;top:338px;width:16px;height:1px;"></div>
<div class="rl" style="left:48px;top:339.8px;height:10.0px;overflow:hidden">2</div>
<div class="rl" style="left:48px;top:349.1px;height:10.0px;overflow:hidden">0</div>
<div class="rl" style="left:48px;top:358.4px;height:10.0px;overflow:hidden">0</div>
<div class="tk" style="left:58px;top:345px;width:3px;height:1px;"></div>
<div class="tk" style="left:58px;top:351px;width:3px;height:1px;"></div>
<div class="tk" style="left:58px;top:358px;width:3px;height:1px;"></div>
<div class="tk" style="left:58px;top:365px;width:3px;height:1px;"></div>
<div class="tk" style="left:45px;top:371px;width:16px;height:1px;"></div>
<div class="rl" style="left:48px;top:372.8px;height:10.0px;overflow:hidden">2</div>
<div class="rl" style="left:48px;top:382.1px;height:10.0px;overflow:hidden">5</div>
<div class="rl" style="left:48px;top:391.4px;height:10.0px;overflow:hidden">0</div>
<div class="tk" style="left:58px;top:378px;width:3px;height:1px;"></div>
<div class="tk" style="left:58px;top:384px;width:3px;height:1px;"></div>
<div class="tk" style="left:58px;top:391px;width:3px;height:1px;"></div>
<div class="tk" style="left:58px;top:398px;width:3px;height:1px;"></div>
<div class="tk" style="left:45px;top:404px;width:16px;height:1px;"></div>
<div class="rl" style="left:48px;top:405.8px;height:10.0px;overflow:hidden">3</div>
<div class="rl" style="left:48px;top:415.1px;height:10.0px;overflow:hidden">0</div>
<div class="rl" style="left:48px;top:424.4px;height:10.0px;overflow:hidden">0</div>
<div class="tk" style="left:58px;top:411px;width:3px;height:1px;"></div>
<div class="tk" style="left:58px;top:418px;width:3px;height:1px;"></div>
<div class="tk" style="left:58px;top:424px;width:3px;height:1px;"></div>
<div class="tk" style="left:58px;top:431px;width:3px;height:1px;"></div>
<div class="tk" style="left:45px;top:438px;width:16px;height:1px;"></div>
<div class="rl" style="left:48px;top:439.8px;height:10.0px;overflow:hidden">3</div>
<div class="rl" style="left:48px;top:449.1px;height:10.0px;overflow:hidden">5</div>
<div class="rl" style="left:48px;top:458.4px;height:10.0px;overflow:hidden">0</div>
<div class="tk" style="left:58px;top:445px;width:3px;height:1px;"></div>
<div class="tk" style="left:58px;top:451px;width:3px;height:1px;"></div>
<div class="tk" style="left:58px;top:458px;width:3px;height:1px;"></div>
<div class="tk" style="left:58px;top:465px;width:3px;height:1px;"></div>
<div class="tk" style="left:45px;top:471px;width:16px;height:1px;"></div>
<div class="rl" style="left:48px;top:472.8px;height:10.0px;overflow:hidden">4</div>
<div class="rl" style="left:48px;top:482.1px;height:10.0px;overflow:hidden">0</div>
<div class="rl" style="left:48px;top:491.4px;height:10.0px;overflow:hidden">0</div>
<div class="tk" style="left:58px;top:478px;width:3px;height:1px;"></div>
<div class="tk" style="left:58px;top:484px;width:3px;height:1px;"></div>
<div class="tk" style="left:58px;top:491px;width:3px;height:1px;"></div>
<div class="tk" style="left:58px;top:498px;width:3px;height:1px;"></div>
<div class="tk" style="left:45px;top:504px;width:16px;height:1px;"></div>
<div class="rl" style="left:48px;top:505.8px;height:10.0px;overflow:hidden">4</div>
<div class="rl" style="left:48px;top:515.1px;height:10.0px;overflow:hidden">5</div>
<div class="rl" style="left:48px;top:524.4px;height:10.0px;overflow:hidden">0</div>
<div class="tk" style="left:58px;top:511px;width:3px;height:1px;"></div>
<div class="tk" style="left:58px;top:518px;width:3px;height:1px;"></div>
<div class="tk" style="left:58px;top:524px;width:3px;height:1px;"></div>
<div class="tk" style="left:58px;top:531px;width:3px;height:1px;"></div>
<div class="tk" style="left:45px;top:538px;width:16px;height:1px;"></div>
<div class="rl" style="left:48px;top:539.8px;height:10.0px;overflow:hidden">5</div>
<div class="rl" style="left:48px;top:549.1px;height:10.0px;overflow:hidden">0</div>
<div class="rl" style="left:48px;top:558.4px;height:10.0px;overflow:hidden">0</div>
<div class="tk" style="left:58px;top:544px;width:3px;height:1px;"></div>
<div class="tk" style="left:58px;top:551px;width:3px;height:1px;"></div>
<div class="tk" style="left:58px;top:558px;width:3px;height:1px;"></div>
<div class="tk" style="left:58px;top:564px;width:3px;height:1px;"></div>
<div class="tk" style="left:45px;top:571px;width:16px;height:1px;"></div>
<div class="rl" style="left:48px;top:572.8px;height:10.0px;overflow:hidden">5</div>
<div class="rl" style="left:48px;top:582.1px;height:10.0px;overflow:hidden">5</div>
<div class="rl" style="left:48px;top:591.4px;height:10.0px;overflow:hidden">0</div>
<div class="tk" style="left:58px;top:578px;width:3px;height:1px;"></div>
<div class="tk" style="left:58px;top:585px;width:3px;height:1px;"></div>
<div class="tk" style="left:58px;top:591px;width:3px;height:1px;"></div>
<div class="tk" style="left:58px;top:598px;width:3px;height:1px;"></div>
<div class="tk" style="left:45px;top:604px;width:16px;height:1px;"></div>
<div class="rl" style="left:48px;top:605.8px;height:10.0px;overflow:hidden">6</div>
<div class="rl" style="left:48px;top:615.1px;height:10.0px;overflow:hidden">0</div>
<div class="rl" style="left:48px;top:624.4px;height:4.6px;overflow:hidden">0</div>
<div class="tk" style="left:58px;top:611px;width:3px;height:1px;"></div>
<div class="tk" style="left:58px;top:618px;width:3px;height:1px;"></div>
<div class="tk" style="left:58px;top:624px;width:3px;height:1px;"></div>
<div class="" style="left:45px;top:96px;width:17px;height:16px;background:#505050;border-right:1px solid #484848;border-bottom:1px solid #484848"></div>
<div style="left:45px;top:108px;width:16px;height:0;border-top:1px dotted #727272"></div><div style="left:57px;top:96px;width:0;height:16px;border-left:1px dotted #727272"></div>
<div class="b" style="left:45px;top:629px;width:662px;height:17px;"></div>
<div class="" style="left:45px;top:629px;width:47px;height:17px;background:#484848;border:1px solid #3e3e3e"></div>
<div class="lt" style="left:48px;top:630px;font-size:11.7px;color:#ececec">66.67%</div>
<div class="lt" style="left:130px;top:630px;font-size:11.7px;color:#dcdcdc;letter-spacing:-0.1px">文档:1.14M/2.29M</div>
<svg style="left:266px;top:632px" width="6" height="11" viewBox="0 0 6 11"><path d="M1 0.5 L5 5.5 L1 10.5" fill="none" stroke="#c0c0c0" stroke-width="1.1"/></svg>
<div class="" style="left:277px;top:629px;width:414px;height:17px;background:#4a4a4a"></div>
<svg style="left:109px;top:204px" width="534" height="334" viewBox="109 204 534 334">
<defs>
<filter id="b6" x="-20%" y="-20%" width="140%" height="140%"><feGaussianBlur stdDeviation="6"/></filter>
<filter id="b3" x="-20%" y="-20%" width="140%" height="140%"><feGaussianBlur stdDeviation="2.6"/></filter>
<filter id="b12" x="-30%" y="-30%" width="160%" height="160%"><feGaussianBlur stdDeviation="12"/></filter>
<linearGradient id="bgv" x1="0" y1="0" x2="0" y2="1"><stop offset="0" stop-color="#0d3206"/><stop offset="0.08" stop-color="#072203"/><stop offset="0.45" stop-color="#051c02"/><stop offset="1" stop-color="#061f03"/></linearGradient>
<radialGradient id="leaf" gradientUnits="userSpaceOnUse" cx="96" cy="368" r="200" gradientTransform="translate(96,368) scale(0.64,1) translate(-96,-368)"><stop offset="0" stop-color="#aad622"/><stop offset="0.25" stop-color="#8fca1e"/><stop offset="0.43" stop-color="#4fa017"/><stop offset="0.58" stop-color="#2e7c13"/><stop offset="0.76" stop-color="#1d580f"/><stop offset="1" stop-color="#184c0c"/></radialGradient>
<clipPath id="pc"><rect x="109" y="204" width="534" height="334"/></clipPath>
</defs>
<g clip-path="url(#pc)">
<rect x="109" y="204" width="534" height="334" fill="url(#bgv)"/>
<rect x="330" y="204" width="320" height="334" fill="#0c4007" filter="url(#b12)"/>
<rect x="100" y="480" width="320" height="70" fill="#0e3807"/>
<path d="M90 366 Q125 342 160 318 Q260 275 420 300 L470 470 L333 474 Q315 500 300 527 L291 538 Q270 521 250 520 Q232 522 219 536 L150 540 Q125 525 109 498 L95 480 Z" fill="url(#leaf)" filter="url(#b3)"/>
<path d="M109 496 Q118 511 127 527 Q133 534 141 538" stroke="#86ac30" stroke-width="2" fill="none" filter="url(#b3)"/>
<path d="M219 537 Q235 522 250 520.5 Q270 522 291 538 Q312 505 334 473" stroke="#34801e" stroke-width="3" fill="none" filter="url(#b3)"/>
<path d="M335 472 L300 527 L292 539 L420 545 L420 470 Z" fill="#122e09" filter="url(#b3)"/>
<path d="M349 466 Q372 498 402 512 L420 440 Z" fill="#5c9c18" filter="url(#b3)"/>
<path d="M349 469 Q373 497 400 510" stroke="#cfe646" stroke-width="4.5" fill="none" filter="url(#b3)"/>
<ellipse cx="617" cy="365" rx="15" ry="50" fill="#5f921b" filter="url(#b6)"/>
<ellipse cx="621" cy="345" rx="8" ry="20" fill="#8cb024" filter="url(#b6)"/><ellipse cx="644" cy="320" rx="4" ry="14" fill="#a8c830" filter="url(#b3)"/>
<ellipse cx="615" cy="545" rx="22" ry="20" fill="#86c01e" filter="url(#b6)"/>
</g></svg>
<div class="" style="left:707px;top:67px;width:1px;height:579px;background:#3a3a3a"></div>
<div class="" style="left:708px;top:67px;width:1px;height:579px;background:#4b4b4b"></div>
<div class="" style="left:709px;top:67px;width:1px;height:579px;background:#3a3a3a"></div>
<div class="d" style="left:710px;top:67px;width:285px;height:11px;"></div>
<svg style="left:734px;top:70px" width="8" height="6" viewBox="0 0 8 6"><path d="M3.7 0.5 L1 3 L3.7 5.5 Z M7.7 0.5 L5 3 L7.7 5.5 Z" fill="#c4c4c4"/></svg>
<svg style="left:981px;top:70px" width="8" height="6" viewBox="0 0 8 6"><path d="M0.3 0.5 L3 3 L0.3 5.5 Z M4.3 0.5 L7 3 L4.3 5.5 Z" fill="#c4c4c4"/></svg>
<div class="" style="left:710px;top:78px;width:38px;height:568px;background:#555;border-top:1px solid #3c3c3c"></div>
<div class="" style="left:710px;top:118px;width:38px;height:2px;background:#3e3e3e"></div>
<div class="" style="left:710px;top:159px;width:38px;height:2px;background:#3e3e3e"></div>
<div class="" style="left:719px;top:82px;width:1px;height:5px;background:#424242"></div>
<div class="" style="left:721px;top:82px;width:1px;height:5px;background:#424242"></div>
<div class="" style="left:723px;top:82px;width:1px;height:5px;background:#424242"></div>
<div class="" style="left:725px;top:82px;width:1px;height:5px;background:#424242"></div>
<div class="" style="left:727px;top:82px;width:1px;height:5px;background:#424242"></div>
<div class="" style="left:729px;top:82px;width:1px;height:5px;background:#424242"></div>
<div class="" style="left:731px;top:82px;width:1px;height:5px;background:#424242"></div>
<div class="" style="left:733px;top:82px;width:1px;height:5px;background:#424242"></div>
<div class="" style="left:735px;top:82px;width:1px;height:5px;background:#424242"></div>
<div class="" style="left:737px;top:82px;width:1px;height:5px;background:#424242"></div>
<div class="" style="left:719px;top:123px;width:1px;height:5px;background:#424242"></div>
<div class="" style="left:721px;top:123px;width:1px;height:5px;background:#424242"></div>
<div class="" style="left:723px;top:123px;width:1px;height:5px;background:#424242"></div>
<div class="" style="left:725px;top:123px;width:1px;height:5px;background:#424242"></div>
<div class="" style="left:727px;top:123px;width:1px;height:5px;background:#424242"></div>
<div class="" style="left:729px;top:123px;width:1px;height:5px;background:#424242"></div>
<div class="" style="left:731px;top:123px;width:1px;height:5px;background:#424242"></div>
<div class="" style="left:733px;top:123px;width:1px;height:5px;background:#424242"></div>
<div class="" style="left:735px;top:123px;width:1px;height:5px;background:#424242"></div>
<div class="" style="left:737px;top:123px;width:1px;height:5px;background:#424242"></div>
<svg style="left:722px;top:94px" width="18" height="18" viewBox="0 0 18 18"><rect x="0.6" y="0.6" width="4.8" height="4.8" fill="#555" stroke="#dcdcdc" stroke-width="1.1"/><rect x="0.6" y="6.6" width="4.8" height="4.8" fill="#555" stroke="#dcdcdc" stroke-width="1.1"/><rect x="0.1" y="12.4" width="5.8" height="5.3" fill="#dcdcdc"/><path d="M9.5 15.5 Q16 12 14.2 5.5 Q13.3 3 10.5 3.2" fill="none" stroke="#dcdcdc" stroke-width="1.9"/><path d="M8 3.6 L12.5 0.3 L12.8 6.2 Z" fill="#dcdcdc"/></svg>
<svg style="left:720px;top:133px" width="20" height="20" viewBox="0 0 20 20"><path d="M2 2 H10 V12 H2 Z M11 8 H19 V19 H11 Z M2 2 L11 8 M10 2 L19 8 M2 12 L11 19 M12 18 L18 9.5" fill="none" stroke="#dcdcdc" stroke-width="1.2"/></svg>
<div class="" style="left:747px;top:78px;width:1px;height:568px;background:#3a3a3a"></div>
<div class="" style="left:748px;top:78px;width:1px;height:568px;background:#4b4b4b"></div>
<div class="" style="left:749px;top:78px;width:1px;height:568px;background:#3a3a3a"></div>
<div class="b" style="left:750px;top:78px;width:245px;height:568px;border-top:1px solid #3c3c3c"></div>
<div class="d" style="left:792px;top:79px;width:203px;height:27px;"></div>
<div class="" style="left:791px;top:79px;width:1px;height:27px;background:#383838"></div>
<div class="" style="left:832px;top:79px;width:1px;height:27px;background:#383838"></div>
<div class="" style="left:874px;top:79px;width:1px;height:27px;background:#383838"></div>
<div class="" style="left:792px;top:106px;width:203px;height:1px;background:#383838"></div>
<div class="lt" style="left:760px;top:86px;color:#f0f0f0;font-size:11.5px">图层</div>
<div class="lt" style="left:801px;top:86px;color:#a2a2a2;font-size:11.5px">通道</div>
<div class="lt" style="left:843px;top:86px;color:#a2a2a2;font-size:11.5px">路径</div>
<div class="" style="left:978px;top:90px;width:11px;height:1px;background:#c8c8c8"></div>
<div class="" style="left:978px;top:92px;width:11px;height:1px;background:#c8c8c8"></div>
<div class="" style="left:978px;top:94px;width:11px;height:1px;background:#c8c8c8"></div>
<div class="" style="left:978px;top:96px;width:11px;height:1px;background:#c8c8c8"></div>
<div class="" style="left:754px;top:114px;width:87px;height:21px;background:#454545;border:1px solid #686868;border-radius:3px"></div>
<svg style="left:760.5px;top:118.5px" width="11.5" height="11.5" viewBox="0 0 14 14"><g><circle cx="8.3" cy="5.7" r="4.6" fill="none" stroke="#d8d8d8" stroke-width="2"/><path d="M5 9 L0.8 13.2" stroke="#d8d8d8" stroke-width="2" stroke-linecap="round"/></g></svg>
<div class="lt" style="left:777px;top:118px;font-size:11.5px;color:#ececec">类型</div>
<svg style="left:830px;top:123px" width="7" height="5" viewBox="0 0 7 5"><path d="M0.5 0.5 L3.5 4 L6.5 0.5" stroke="#c8c8c8" stroke-width="1.1" fill="none"/></svg>
<svg style="left:856px;top:119px" width="13" height="11" viewBox="0 0 13 11"><rect x="0.7" y="0.7" width="11.6" height="9.6" fill="none" stroke="#d8d8d8" stroke-width="1.3"/><path d="M2.5 8.5 L5 4.5 L7 7 L8.5 5.5 L10.5 8.5 Z" fill="#d8d8d8"/></svg>
<svg style="left:880px;top:118px" width="12" height="12" viewBox="0 0 12 12"><circle cx="6" cy="6" r="5.2" fill="none" stroke="#d8d8d8" stroke-width="1.4"/><path d="M9.7 2.3 A5.2 5.2 0 0 1 2.3 9.7 Z" fill="#d8d8d8"/></svg>
<div style="left:905px;top:115px;font-family:'Liberation Serif',serif;font-weight:bold;font-size:14.5px;line-height:18px;color:#d8d8d8;transform:scaleX(1.13);transform-origin:0 0">T</div>
<svg style="left:928px;top:118px" width="13" height="13" viewBox="0 0 13 13"><rect x="1.6" y="1.6" width="9.8" height="9.8" fill="none" stroke="#d8d8d8" stroke-width="1.2"/><rect x="0" y="0" width="3" height="3" fill="#d8d8d8"/><rect x="10" y="0" width="3" height="3" fill="#d8d8d8"/><rect x="0" y="10" width="3" height="3" fill="#d8d8d8"/><rect x="10" y="10" width="3" height="3" fill="#d8d8d8"/></svg>
<svg style="left:954px;top:118px" width="11" height="13" viewBox="0 0 11 13"><path d="M3.2 0.7 H7.5 L10.3 3.5 V12.3 H3.2 Z" fill="none" stroke="#d8d8d8" stroke-width="1.3"/><rect x="0" y="6" width="5.5" height="7" fill="#d8d8d8"/><path d="M7.2 0.7 V3.8 H10.3" fill="none" stroke="#d8d8d8" stroke-width="1"/></svg>
<div class="" style="left:981px;top:115px;width:10px;height:19px;background:#424242;border:1px solid #6a6a6a;border-radius:5px"></div>
<div class="" style="left:982px;top:116px;width:8px;height:9px;background:#e6e6e6;border-radius:4px"></div>
<div class="" style="left:750px;top:138px;width:245px;height:1px;background:#3e3e3e"></div>
<div class="" style="left:754px;top:142px;width:118px;height:20px;background:#454545;border:1px solid #686868;border-radius:3px"></div>
<div class="lt" style="left:763px;top:145px;font-size:11.5px;color:#ececec">正常</div>
<svg style="left:861px;top:150px" width="7" height="5" viewBox="0 0 7 5"><path d="M0.5 0.5 L3.5 4 L6.5 0.5" stroke="#c8c8c8" stroke-width="1.1" fill="none"/></svg>
<div class="lt" style="left:879px;top:145px;font-size:11.6px;color:#dcdcdc">不透明度<span style="position:static;margin-left:3px">:</span></div>
<div class="" style="left:936px;top:142px;width:55px;height:20px;background:#454545;border:1px solid #686868;border-radius:3px"></div>
<div class="" style="left:974px;top:143px;width:1px;height:18px;background:#686868"></div>
<div class="lt" style="left:938px;top:145px;font-size:11.5px;color:#ececec">100%</div>
<svg style="left:979px;top:150px" width="7" height="5" viewBox="0 0 7 5"><path d="M0.5 0.5 L3.5 4 L6.5 0.5" stroke="#c8c8c8" stroke-width="1.1" fill="none"/></svg>
<div class="" style="left:750px;top:164px;width:245px;height:1px;background:#3e3e3e"></div>
<div class="lt" style="left:755px;top:172px;font-size:11.5px;color:#dcdcdc">锁定<span style="position:static;margin-left:4px">:</span></div>
<svg style="left:794px;top:173px" width="12" height="12" viewBox="0 0 12 12"><rect x="0.6" y="0.6" width="10.8" height="10.8" fill="none" stroke="#d8d8d8" stroke-width="1.2"/><path d="M1 1h3.4v3.4H1z M7.6 1h3.4v3.4H7.6z M4.4 4.4h3.2v3.2H4.4z M1 7.6h3.4v3.4H1z M7.6 7.6h3.4v3.4H7.6z" fill="#d8d8d8"/></svg>
<svg style="left:815px;top:172px" width="14" height="14" viewBox="0 0 14 14"><path d="M13.2 0.6 Q13.9 1.2 13.2 2.2 L8.6 8.6 L6.4 6.8 L11.9 1 Q12.6 0.2 13.2 0.6 Z M5.7 7.4 Q3.4 7.8 3.2 10.4 Q2.7 12.2 1 12.9 Q5.4 14 7.1 11.3 Q7.9 9.9 7.5 8.9 Z" fill="#d8d8d8"/></svg>
<svg style="left:837px;top:172px" width="13" height="13" viewBox="0 0 16 16"><path d="M8 0 L11.2 3.8 H8.7 V7.3 H12.2 V4.8 L16 8 L12.2 11.2 V8.7 H8.7 V12.2 H11.2 L8 16 L4.8 12.2 H7.3 V8.7 H3.8 V11.2 L0 8 L3.8 4.8 V7.3 H7.3 V3.8 H4.8 Z" fill="#d8d8d8"/></svg>
<svg style="left:859px;top:172px" width="14" height="14" viewBox="0 0 14 14"><path d="M3 0.5 V11 H13.5 M0.5 3 H11 V13.5" fill="none" stroke="#d8d8d8" stroke-width="1.2"/><path d="M12.5 3 H14 M11 0 V1.5" stroke="#d8d8d8" stroke-width="1.2"/></svg>
<svg style="left:882px;top:172px" width="11" height="13" viewBox="0 0 11 13"><path d="M2.7 6 V4 A2.8 2.8 0 0 1 8.3 4 V6" fill="none" stroke="#d8d8d8" stroke-width="1.5"/><rect x="0.3" y="5.6" width="10.4" height="7.2" rx="1" fill="#d8d8d8"/></svg>
<div class="lt" style="left:903px;top:172px;font-size:11.5px;color:#dcdcdc">填充<span style="position:static;margin-left:3px">:</span></div>
<div class="" style="left:936px;top:168px;width:55px;height:21px;background:#454545;border:1px solid #686868;border-radius:3px"></div>
<div class="" style="left:974px;top:169px;width:1px;height:19px;background:#686868"></div>
<div class="lt" style="left:938px;top:172px;font-size:11.5px;color:#ececec">100%</div>
<svg style="left:979px;top:177px" width="7" height="5" viewBox="0 0 7 5"><path d="M0.5 0.5 L3.5 4 L6.5 0.5" stroke="#c8c8c8" stroke-width="1.1" fill="none"/></svg>
<div class="" style="left:750px;top:192px;width:245px;height:1px;background:#3e3e3e"></div>
<div class="" style="left:750px;top:193px;width:229px;height:427px;background:#4d4d4d"></div>
<div class="" style="left:979px;top:193px;width:16px;height:427px;background:#484848"></div>
<div class="" style="left:750px;top:194px;width:229px;height:27px;background:#535353"></div>
<div class="" style="left:781px;top:194px;width:198px;height:27px;background:#6a6a6a"></div>
<div class="" style="left:750px;top:221px;width:229px;height:1px;background:#3e3e3e"></div>
<div class="" style="left:750px;top:222px;width:229px;height:26px;background:#535353"></div>
<div class="" style="left:750px;top:248px;width:229px;height:1px;background:#3e3e3e"></div>
<div class="" style="left:780px;top:194px;width:1px;height:54px;background:#444"></div>
<svg style="left:759px;top:203px" width="14" height="9" viewBox="0 0 14 9"><path d="M0.3 4.5 Q7 -3.3 13.7 4.5 Q7 12.3 0.3 4.5 Z" fill="#e0e0e0"/><circle cx="7" cy="4.3" r="2.7" fill="#535353"/><circle cx="7" cy="4.3" r="1.3" fill="#e0e0e0"/></svg>
<svg style="left:759px;top:231px" width="14" height="9" viewBox="0 0 14 9"><path d="M0.3 4.5 Q7 -3.3 13.7 4.5 Q7 12.3 0.3 4.5 Z" fill="#e0e0e0"/><circle cx="7" cy="4.3" r="2.7" fill="#535353"/><circle cx="7" cy="4.3" r="1.3" fill="#e0e0e0"/></svg>
<div class="" style="left:784px;top:196px;width:33px;height:23px;background:#3c3c3c"></div>
<div class="" style="left:784px;top:224px;width:33px;height:23px;background:#3c3c3c"></div>
<svg style="left:785px;top:197px" width="31" height="21" viewBox="0 0 32 21" preserveAspectRatio="none"><rect width="32" height="21" fill="#0a2c05"/><rect width="32" height="3" fill="#041703"/><path d="M0 8 L5 6 L8 10 L5 17 L0 19 Z" fill="#348c16"/><path d="M22 3 L28 2 L31 8 L25 11 Z" fill="#1c560d"/><path d="M19 17 L25 13 L32 17 V21 H19 Z" fill="#23600f"/><path d="M7 13 L12 3.5 L18 2.5 L21.5 6 L20 14 L15.5 19 L8 15 Z" fill="#6fbe1c"/><path d="M10 10 L13 4.5 L17.5 4 L19 8 L15 13 Z" fill="#b2e034"/><path d="M8 15 L15.5 19 L12 21 H5 Z" fill="#2f7c12"/><path d="M29.5 18 L32 17.5 V21 H30 Z" fill="#98c82c"/><path d="M23 0 L25 0 L24.5 4 Z" fill="#4c9a1a"/></svg>
<svg style="left:785px;top:225px" width="31" height="21" viewBox="0 0 32 21" preserveAspectRatio="none"><rect width="32" height="21" fill="#0a2c05"/><rect width="32" height="3" fill="#041703"/><path d="M0 8 L5 6 L8 10 L5 17 L0 19 Z" fill="#348c16"/><path d="M22 3 L28 2 L31 8 L25 11 Z" fill="#1c560d"/><path d="M19 17 L25 13 L32 17 V21 H19 Z" fill="#23600f"/><path d="M7 13 L12 3.5 L18 2.5 L21.5 6 L20 14 L15.5 19 L8 15 Z" fill="#6fbe1c"/><path d="M10 10 L13 4.5 L17.5 4 L19 8 L15 13 Z" fill="#b2e034"/><path d="M8 15 L15.5 19 L12 21 H5 Z" fill="#2f7c12"/><path d="M29.5 18 L32 17.5 V21 H30 Z" fill="#98c82c"/><path d="M23 0 L25 0 L24.5 4 Z" fill="#4c9a1a"/></svg>
<svg style="left:782px;top:195px" width="36" height="25" viewBox="0 0 36 25"><path d="M0.5 8 V0.5 H12 M24 0.5 H35.5 V8 M35.5 17 V24.5 H24 M12 24.5 H0.5 V17" fill="none" stroke="#f4f4f4" stroke-width="1"/></svg>
<div class="lt" style="left:825px;top:201px;font-size:12px;color:#f0f0f0">图层 <span style="position:static;margin-left:2px;font-family:'Liberation Serif',serif;font-size:12px">1</span></div>
<div class="lt" style="left:825px;top:229px;font-size:12px;color:#f0f0f0">背景</div>
<svg style="left:952px;top:230px" width="11" height="13" viewBox="0 0 11 13"><path d="M2.7 6 V4 A2.8 2.8 0 0 1 8.3 4 V6" fill="none" stroke="#d8d8d8" stroke-width="1.3"/><rect x="0.8" y="5.8" width="9.4" height="6.5" rx="0.8" fill="none" stroke="#d8d8d8" stroke-width="1.3"/><rect x="4.9" y="7.8" width="1.2" height="2.4" fill="#d8d8d8"/></svg>
<div class="b" style="left:750px;top:620px;width:245px;height:26px;border-top:1px solid #3e3e3e"></div>
<svg style="left:790px;top:628px" width="16" height="9" viewBox="0 0 16 9"><rect x="0.7" y="1.2" width="8" height="6.6" rx="3.3" fill="none" stroke="#8a8a8a" stroke-width="1.3"/><rect x="7.3" y="1.2" width="8" height="6.6" rx="3.3" fill="none" stroke="#8a8a8a" stroke-width="1.3"/></svg>
<div style="left:819px;top:624px;font-style:italic;font-size:14px;line-height:16px;color:#d8d8d8;font-family:'Liberation Sans',sans-serif;letter-spacing:-0.3px">fx</div>
<svg style="left:832px;top:640px" width="4" height="3" viewBox="0 0 4 3"><path d="M0 0 H4 L2 3 Z" fill="#d8d8d8"/></svg>
<svg style="left:844px;top:627px" width="15" height="11" viewBox="0 0 15 11"><rect width="15" height="11" fill="#d8d8d8"/><circle cx="7.5" cy="5.5" r="3.3" fill="#535353"/></svg>
<svg style="left:873px;top:627px" width="12" height="12" viewBox="0 0 12 12"><circle cx="6" cy="6" r="5.2" fill="none" stroke="#d8d8d8" stroke-width="1.4"/><path d="M9.7 2.3 A5.2 5.2 0 0 1 2.3 9.7 Z" fill="#d8d8d8"/></svg>
<svg style="left:886px;top:640px" width="4" height="3" viewBox="0 0 4 3"><path d="M0 0 H4 L2 3 Z" fill="#d8d8d8"/></svg>
<svg style="left:899px;top:627px" width="14" height="11" viewBox="0 0 14 11"><path d="M0 0.5 H5 L6.5 2 H14 V11 H0 Z" fill="#d8d8d8"/></svg>
<svg style="left:928px;top:627.5px" width="11" height="11" viewBox="0 0 12 12"><path transform="translate(12,0) scale(-1,1)" d="M0.7 0.7 H11.3 V7.5 L7.5 11.3 H0.7 Z" fill="#3c3c3c" stroke="#d8d8d8" stroke-width="1.4"/><path transform="translate(12,0) scale(-1,1)" d="M11.3 7.5 H7.5 V11.3 Z" fill="#d8d8d8" stroke="#d8d8d8" stroke-width="1"/></svg>
<svg style="left:954px;top:626.5px" width="11" height="13" viewBox="0 0 11 14"><path d="M0 2.5 H11 M3.5 2.5 V0.7 H7.5 V2.5 M1.2 2.5 L1.8 13.3 H9.2 L9.8 2.5" fill="none" stroke="#d8d8d8" stroke-width="1.3"/><path d="M3.8 5 V11 M5.5 5 V11 M7.2 5 V11" stroke="#d8d8d8" stroke-width="1"/></svg>
<div style="left:4px;top:66px;width:991px;height:580px;border:1px solid #383838;border-top:none"></div>
<div style="left:764.5px;top:562px;font-size:40px;line-height:44px;font-weight:bold;color:rgba(225,225,225,0.86);font-family:'Liberation Sans',sans-serif">Bai</div>
<svg style="left:826px;top:543px" width="56" height="58" viewBox="0 0 56 58"><g fill="rgba(225,225,225,0.86)"><ellipse cx="19.5" cy="10" rx="6.2" ry="8.8" transform="rotate(-8 19.5 10)"/><ellipse cx="37" cy="10.5" rx="6.2" ry="8.8" transform="rotate(10 37 10.5)"/><ellipse cx="7.5" cy="25" rx="5.8" ry="8" transform="rotate(-22 7.5 25)"/><ellipse cx="48.5" cy="27" rx="5.8" ry="8" transform="rotate(22 48.5 27)"/><path d="M28 22 Q36 22 41 31 Q52 41 49 50 Q46 57 36 55.5 Q28 54 20 55.5 Q9 57 7 49 Q5 41 15 32 Q20 22 28 22 Z"/></g><text x="27.5" y="51.5" text-anchor="middle" font-family="Liberation Sans, sans-serif" font-weight="bold" font-size="26" fill="#4d4d4d" letter-spacing="-1.2">du</text></svg>
<div style="left:882px;top:563px;font-size:30px;line-height:40px;font-weight:bold;color:rgba(225,225,225,0.86);font-family:'Liberation Sans','Noto Sans CJK SC',sans-serif">经验</div>
<div style="left:766px;top:603px;font-size:22.2px;line-height:26px;color:rgba(225,225,225,0.86);font-family:'Liberation Sans',sans-serif">jingyan.baidu.com</div>
<div class="menu" style="left:153px;top:27px;width:249px;height:446px">
<div class="row" style="top:2px"><span class="t">模式(M)</span><span class="arr" style="top:4px"></span></div>
<div class="sep" style="top:25px"></div>
<div class="row hl" style="top:31px"><span class="t">调整(J)</span><span class="arr" style="top:5px"></span></div>
<div class="sep" style="top:55px"></div>
<div class="row" style="top:61px"><span class="t">自动色调(N)</span><span class="k">Shift+Ctrl+L</span></div>
<div class="row" style="top:82px"><span class="t">自动对比度(U)</span><span class="k">Alt+Shift+Ctrl+L</span></div>
<div class="row" style="top:103px"><span class="t">自动颜色(O)</span><span class="k">Shift+Ctrl+B</span></div>
<div class="sep" style="top:127px"></div>
<div class="row" style="top:133px"><span class="t">图像大小(I)<i>...</i></span><span class="k">Alt+Ctrl+I</span></div>
<div class="row" style="top:154px"><span class="t">画布大小(S)<i>...</i></span><span class="k">Alt+Ctrl+C</span></div>
<div class="row" style="top:175px"><span class="t">图像旋转(G)</span><span class="arr" style="top:5px"></span></div>
<div class="row dis" style="top:196px"><span class="t">裁剪(P)</span></div>
<div class="row" style="top:217px"><span class="t">裁切(R)<i>...</i></span></div>
<div class="row" style="top:238px"><span class="t">显示全部(V)</span></div>
<div class="sep" style="top:262px"></div>
<div class="row" style="top:268px"><span class="t">复制(D)<i>...</i></span></div>
<div class="row" style="top:289px"><span class="t">应用图像(Y)<i>...</i></span></div>
<div class="row" style="top:310px"><span class="t">计算(C)<i>...</i></span></div>
<div class="sep" style="top:334px"></div>
<div class="row" style="top:340px"><span class="t">变量(B)</span><span class="arr" style="top:5px"></span></div>
<div class="row dis" style="top:361px"><span class="t">应用数据组(L)<i>...</i></span></div>
<div class="sep" style="top:385px"></div>
<div class="row dis" style="top:391px"><span class="t">陷印(T)<i>...</i></span></div>
<div class="sep" style="top:415px"></div>
<div class="row" style="top:421px"><span class="t">分析(A)</span><span class="arr" style="top:5px"></span></div>
</div>
<div class="red" style="left:155px;top:54px;width:242px;height:29px"></div>
<div class="menu" style="left:397px;top:56px;width:222px;height:504px">
<div class="row hl" style="top:2px"><span class="t">亮度/对比度(C)<i>...</i></span></div>
<div class="row" style="top:23px"><span class="t">色阶(L)<i>...</i></span><span class="k">Ctrl+L</span></div>
<div class="row" style="top:44px"><span class="t">曲线(U)<i>...</i></span><span class="k">Ctrl+M</span></div>
<div class="row" style="top:65px"><span class="t">曝光度(E)<i>...</i></span></div>
<div class="sep" style="top:89px"></div>
<div class="row" style="top:95px"><span class="t">自然饱和度(V)<i>...</i></span></div>
<div class="row" style="top:116px"><span class="t">色相/饱和度(H)<i>...</i></span><span class="k">Ctrl+U</span></div>
<div class="row" style="top:137px"><span class="t">色彩平衡(B)<i>...</i></span><span class="k">Ctrl+B</span></div>
<div class="row" style="top:158px"><span class="t">黑白(K)<i>...</i></span><span class="k">Alt+Shift+Ctrl+B</span></div>
<div class="row" style="top:179px"><span class="t">照片滤镜(F)<i>...</i></span></div>
<div class="row" style="top:200px"><span class="t">通道混合器(X)<i>...</i></span></div>
<div class="row" style="top:221px"><span class="t">颜色查找<i>...</i></span></div>
<div class="sep" style="top:245px"></div>
<div class="row" style="top:251px"><span class="t">反相(I)</span><span class="k">Ctrl+I</span></div>
<div class="row" style="top:272px"><span class="t">色调分离(P)<i>...</i></span></div>
<div class="row" style="top:293px"><span class="t">阈值(T)<i>...</i></span></div>
<div class="row" style="top:314px"><span class="t">渐变映射(G)<i>...</i></span></div>
<div class="row" style="top:335px"><span class="t">可选颜色(S)<i>...</i></span></div>
<div class="sep" style="top:359px"></div>
<div class="row" style="top:365px"><span class="t">阴影/高光(W)<i>...</i></span></div>
<div class="row" style="top:386px"><span class="t">HDR 色调<i>...</i></span></div>
<div class="sep" style="top:410px"></div>
<div class="row" style="top:416px"><span class="t">去色(D)</span><span class="k">Shift+Ctrl+U</span></div>
<div class="row" style="top:437px"><span class="t">匹配颜色(M)<i>...</i></span></div>
<div class="row" style="top:458px"><span class="t">替换颜色(R)<i>...</i></span></div>
<div class="row" style="top:479px"><span class="t">色调均化(Q)</span></div>
</div>
<div class="red" style="left:401px;top:57px;width:214px;height:25px"></div>
<div class="red" style="left:147px;top:3px;width:53px;height:24px"></div>
<div style="left:0;top:0;width:999px;height:650px;border:1px solid #161616;border-radius:6px 6px 0 0;pointer-events:none"></div>
<div style="left:0;top:0;width:6px;height:6px;background:radial-gradient(circle at 6px 6px, transparent 5.5px, #000 6px)"></div>
<div style="left:993px;top:0;width:6px;height:6px;background:radial-gradient(circle at 0px 6px, transparent 5.5px, #000 6px)"></div>
</body>
</html>
